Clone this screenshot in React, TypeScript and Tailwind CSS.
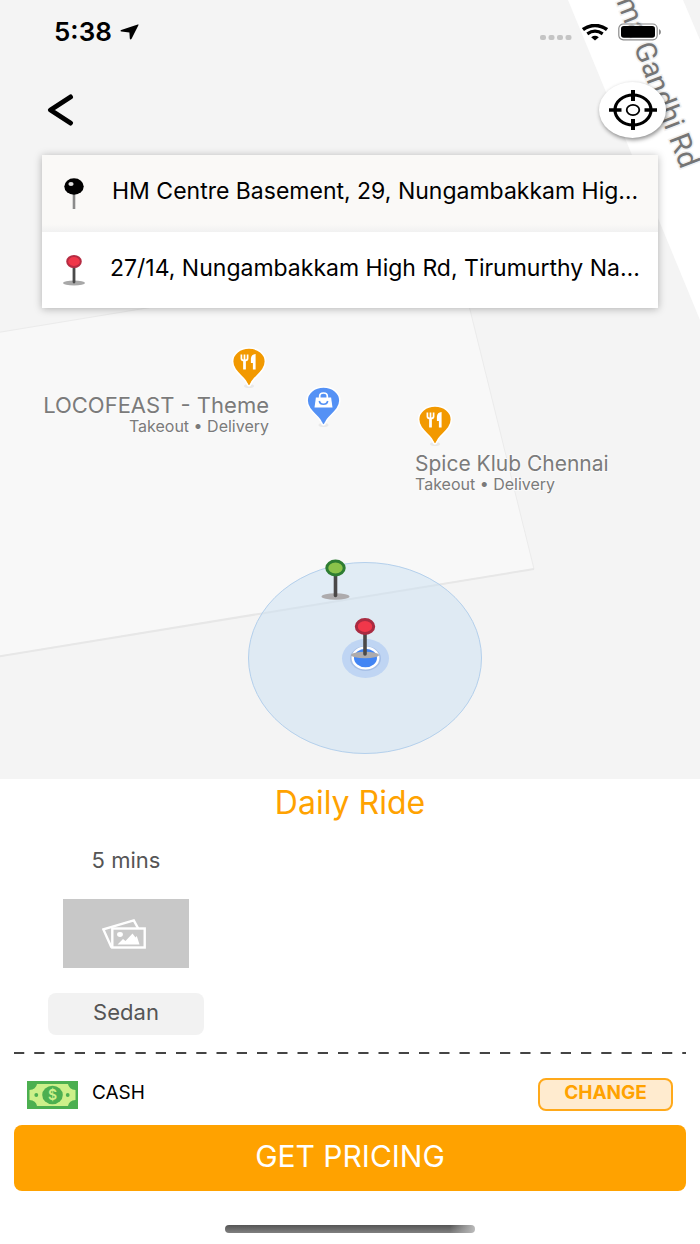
import React from "react";

type PinProps = { x: number; y: number; ring: string; fill: string };
type PlaceProps = { x: number; y: number; color: string; children: React.ReactNode };

// Round headed pin standing on its shadow, (x, y) is the foot
const StandingPin: React.FC<PinProps> = ({ x, y, ring, fill }) => (
    <g transform={`translate(${x} ${y})`}>
        <ellipse rx="14" ry="3.2" fill="#adabad" />
        <path d="M0 -23V-1" stroke="#4a4848" strokeWidth="3.6" strokeLinecap="round" />
        <ellipse cy="-28.5" rx="8.7" ry="7" fill={fill} stroke={ring} strokeWidth="3" />
    </g>
);

// Teardrop place marker, (x, y) is the tip
const PlacePin: React.FC<PlaceProps> = ({ x, y, color, children }) => (
    <g transform={`translate(${x} ${y})`}>
        <ellipse cy="0" rx="5" ry="2" fill="#000" opacity="0.06" />
        <path
            d="M0 0C-1.2 0 -1.6 -1 -2.2 -2.6C-4.5 -9.5 -16.4 -14 -16.4 -24.5C-16.4 -32.3 -9 -38 0 -38C9 -38 16.4 -32.3 16.4 -24.5C16.4 -14 4.5 -9.5 2.2 -2.6C1.6 -1 1.2 0 0 0Z"
            fill={color}
            stroke="#fff"
            strokeWidth="1.6"
        />
        {children}
    </g>
);

const Cutlery = () => (
    <g>
        <path d="M-7.6 -31.5V-27.5Q-7.6 -25.5 -4.5 -25.5Q-1.4 -25.5 -1.4 -27.5V-31.5M-4.5 -31.5V-17" fill="none" stroke="#fff" strokeWidth="1.7" />
        <path d="M-4.5 -26V-16.5" stroke="#fff" strokeWidth="2.6" />
        <path d="M6.6 -32V-16.5H3.9V-23H1.9V-27.5Q2.2 -31.6 6.6 -32Z" fill="#fff" />
    </g>
);

const MapView = () => (
    <svg
        viewBox="0 0 700 779"
        preserveAspectRatio="xMidYMin slice"
        className="absolute inset-0 h-full w-full bg-[#f4f4f4] font-[Inter,sans-serif]"
        role="img"
        aria-label="Map"
    >
        <path d="M-5 333L457 257L534 569L-5 657Z" fill="#f8f8f8" stroke="#ebebeb" strokeWidth="1" />
        <path d="M-5 657L534 569" stroke="#e7e7e7" strokeWidth="2" />
        <path d="M568 0H683L700 40V320L632 155Z" fill="#fff" />
        <text
            transform="translate(681 170) rotate(69)"
            textAnchor="end"
            fontSize="29"
            fill="#757575"
            stroke="#f1f1f1"
            strokeWidth="3"
            paintOrder="stroke"
            className="font-[Roboto,sans-serif]"
        >
            ma Gandhi Rd
        </text>

        <PlacePin x={249} y={386} color="#f29900">
            <Cutlery />
        </PlacePin>
        <PlacePin x={323.5} y={425} color="#5491f5">
            <path d="M-7.6 -27.5H7.6L9 -17.5H-9Z" fill="#fff" />
            <path d="M-3.8 -27V-29Q-3.8 -32 0 -32Q3.8 -32 3.8 -29V-27" fill="none" stroke="#fff" strokeWidth="1.7" />
            <path d="M-4.2 -24Q-3.6 -20.8 0 -20.8Q3.6 -20.8 4.2 -24" fill="none" stroke="#5491f5" strokeWidth="1.6" />
        </PlacePin>
        <PlacePin x={435} y={444} color="#f29900">
            <Cutlery />
        </PlacePin>

        <g fill="#7b7b7b" stroke="#fafafa" strokeWidth="2" paintOrder="stroke">
            <text x="269" y="413" textAnchor="end" fontSize="22">LOCOFEAST - Theme</text>
            <text x="269" y="432" textAnchor="end" fontSize="16">Takeout • Delivery</text>
            <text x="415" y="471" fontSize="21">Spice Klub Chennai</text>
            <text x="415" y="490" fontSize="16">Takeout • Delivery</text>
        </g>

        <ellipse cx="365" cy="658" rx="116.5" ry="95.5" fill="#cae0f2" fillOpacity="0.5" stroke="#b4d0ec" />
        <ellipse cx="365.5" cy="658.5" rx="23.5" ry="19.5" fill="#bfd5f3" />
        <ellipse cx="365.5" cy="658.5" rx="15.5" ry="12.5" fill="#a6bfe6" />
        <ellipse cx="365.5" cy="658" rx="12.7" ry="10.4" fill="#4285f4" stroke="#fff" strokeWidth="2.4" />
        <StandingPin x={335.5} y={596.5} ring="#2e7d32" fill="#8bc34a" />
        <StandingPin x={365} y={655} ring="#a92b41" fill="#f0374a" />
    </svg>
);

const StatusBar = () => (
    <div className="flex h-16 items-center justify-between pl-[54px] pr-[38px]">
        <div className="flex items-center gap-2">
            <span className="font-[Inter,sans-serif] text-[26px] leading-8 font-semibold">5:38</span>
            <svg width="19" height="16" viewBox="0 0 19 16" aria-hidden="true">
                <path d="M17.8 .4Q18.8 .2 18.4 1.2L11.6 14.8Q10.4 16.4 9.8 14.6L9.4 8.4L1.4 7.6Q-.4 7 1.2 6Z" fill="#000" />
            </svg>
        </div>
        <div className="flex items-center gap-[10px]">
            <svg width="32" height="18" viewBox="0 0 32 18" fill="#c4c4c4" aria-hidden="true">
                <rect x="0" y="12" width="6" height="5" rx="2" />
                <rect x="8.5" y="12" width="6" height="5" rx="2" />
                <rect x="17" y="12" width="6" height="5" rx="2" />
                <rect x="25.5" y="12" width="6" height="5" rx="2" />
            </svg>
            <svg width="26" height="17" viewBox="0 0 26 17" fill="none" stroke="#000" aria-hidden="true">
                <path d="M1 5.6Q13 -2.6 25 5.6" strokeWidth="3.6" />
                <path d="M5.3 9.8Q13 4.6 20.7 9.8" strokeWidth="3.2" />
                <path d="M9.2 13.3Q13 10.4 16.8 13.3L13 16.5Z" fill="#000" stroke="none" />
            </svg>
            <svg width="44" height="18" viewBox="0 0 44 18" aria-hidden="true">
                <rect x=".8" y="1" width="38.4" height="15.8" rx="4.5" fill="#fff" fillOpacity=".5" stroke="#8a8a8a" strokeWidth="1.2" />
                <rect x="3" y="3" width="34" height="11.8" rx="2.8" fill="#000" />
                <path d="M41 6Q43 7 43 9T41 12Z" fill="#8a8a8a" />
            </svg>
        </div>
    </div>
);

const MoneyIcon = () => (
    <svg width="51" height="28" viewBox="0 0 51 28" aria-hidden="true">
        <rect width="51" height="28" fill="#4caf50" />
        <path d="M10 3H41Q42 8.5 48.5 9V19Q42 19.5 41 25H10Q9 19.5 2.5 19V9Q9 8.5 10 3Z" fill="#cdf08a" />
        <ellipse cx="25.5" cy="14" rx="10.3" ry="9.3" fill="#4caf50" />
        <circle cx="9.3" cy="14" r="1.9" fill="#4caf50" />
        <circle cx="40.7" cy="14" r="1.9" fill="#4caf50" />
        <text x="25.5" y="19" textAnchor="middle" fontSize="14" fontWeight="600" fill="#cdf08a">$</text>
    </svg>
);

const PhotosIcon = () => (
    <svg width="44" height="30" viewBox="0 0 44 30" fill="none" stroke="#fff" strokeWidth="2.4" aria-hidden="true">
        <path d="M36.2 9.5L31.8 1.4L1.4 10.4L9.5 28.5" />
        <rect x="10.3" y="9.5" width="32.4" height="19" />
        <ellipse cx="18" cy="15.5" rx="2.9" ry="2.4" fill="#fff" stroke="none" />
        <path d="M15.5 25.5L21 20L23.5 22L30.5 14.5L33.5 18.5L34.8 17L37.5 25.5Z" fill="#fff" stroke="none" />
    </svg>
);

const App: React.FC = () => {
    return (
        <div className="flex min-h-screen flex-col bg-white font-[Inter,sans-serif] text-black">
            <main className="relative min-h-[640px] flex-1 overflow-hidden">
                <MapView />
                <div className="relative">
                    <StatusBar />
                    <div className="mt-[18px] flex items-center justify-between pl-[47px] pr-[34px]">
                        <button type="button" aria-label="Back" className="cursor-pointer">
                            <svg width="27" height="32" viewBox="0 0 27 32" fill="none" stroke="#000" strokeWidth="5" strokeLinecap="round" strokeLinejoin="round">
                                <path d="M23.5 3L3.5 16L23.5 29" />
                            </svg>
                        </button>
                        <button
                            type="button"
                            aria-label="Current location"
                            className="flex h-14 w-[67px] cursor-pointer items-center justify-center rounded-[50%] bg-white shadow-[1px_2px_4px_rgba(0,0,0,0.45)]"
                        >
                            <svg width="50" height="42" viewBox="0 0 50 42" fill="none" stroke="#000">
                                <ellipse cx="25" cy="21" rx="18" ry="15" strokeWidth="3.2" />
                                <ellipse cx="25" cy="21" rx="6.3" ry="5.2" strokeWidth="1.8" />
                                <path d="M25 1V12M25 30V41" strokeWidth="4" />
                                <path d="M1 21H13.5M36.5 21H49" strokeWidth="3.4" />
                            </svg>
                        </button>
                    </div>
                    <div className="mx-[42px] mt-[17px] text-[23px] shadow-[0_1px_8px_rgba(0,0,0,0.28)]">
                        <button type="button" className="flex h-[77px] w-full cursor-pointer items-center gap-[26px] bg-[linear-gradient(#faf9f7_90%,#f1f1f1)] pl-5 pr-2">
                            <svg width="24" height="34" viewBox="0 0 24 34" className="shrink-0" aria-hidden="true">
                                <path d="M12 15V32" stroke="#8b8b8b" strokeWidth="2.6" />
                                <ellipse cx="12" cy="9.5" rx="9.7" ry="8.2" fill="#000" />
                                <ellipse cx="9" cy="7" rx="2.6" ry="2" fill="#ddd" />
                            </svg>
                            <span className="truncate pb-1">HM Centre Basement, 29, Nungambakkam Hig…</span>
                        </button>
                        <button type="button" className="flex h-[76px] w-full cursor-pointer items-center gap-6 bg-white pl-5 pr-2">
                            <svg width="24" height="34" viewBox="0 0 24 34" className="shrink-0" aria-hidden="true">
                                <ellipse cx="12" cy="30" rx="11" ry="2.4" fill="#a8a8a8" />
                                <path d="M12 14V29" stroke="#4a4a4a" strokeWidth="2.8" strokeLinecap="round" />
                                <ellipse cx="12" cy="8.5" rx="6.8" ry="5.5" fill="#f0374a" stroke="#b52c43" strokeWidth="2" />
                            </svg>
                            <span className="truncate pb-1">27/14, Nungambakkam High Rd, Tirumurthy Na…</span>
                        </button>
                    </div>
                </div>
            </main>

            <section className="px-[14px] pb-[11px]">
                <h1 className="text-center text-[32px] leading-[48px] text-[#ffa200]">Daily Ride</h1>
                <button type="button" className="ml-[34px] mt-[19px] flex w-[156px] cursor-pointer flex-col items-center gap-[25px] text-[22px] text-[#555]">
                    <span className="leading-7">5 mins</span>
                    <span className="flex h-[69px] w-[126px] items-center justify-center bg-[#c8c8c8] pr-1">
                        <PhotosIcon />
                    </span>
                    <span className="w-full rounded-lg bg-[#f2f2f2] pb-1 leading-[38px]">Sedan</span>
                </button>

                <svg className="mt-[17px] h-[2px] w-full" aria-hidden="true">
                    <line x1="0" y1="1" x2="100%" y2="1" stroke="#444" strokeWidth="2" strokeDasharray="10.25 10" />
                </svg>

                <div className="mt-6 flex items-center gap-[14px] px-[13px]">
                    <MoneyIcon />
                    <span className="flex-1 pb-1 text-[19px] leading-7">CASH</span>
                    <button type="button" className="h-[33px] w-[135px] cursor-pointer rounded-lg border-2 border-[#ffa91a] bg-[#ffebcf] pb-1 text-[19px] leading-6 font-bold text-[#ffa200]">
                        CHANGE
                    </button>
                </div>

                <button type="button" className="mt-[14px] h-[66px] w-full cursor-pointer rounded-lg bg-[#ffa200] pb-1 text-[30px] text-white">
                    GET PRICING
                </button>
                <div className="mx-auto mt-[34px] h-2 w-[250px] rounded-full bg-[linear-gradient(to_right,transparent_90%,#bbb),linear-gradient(#555,#808080)]"></div>
            </section>
        </div>
    );
};

export default App;
